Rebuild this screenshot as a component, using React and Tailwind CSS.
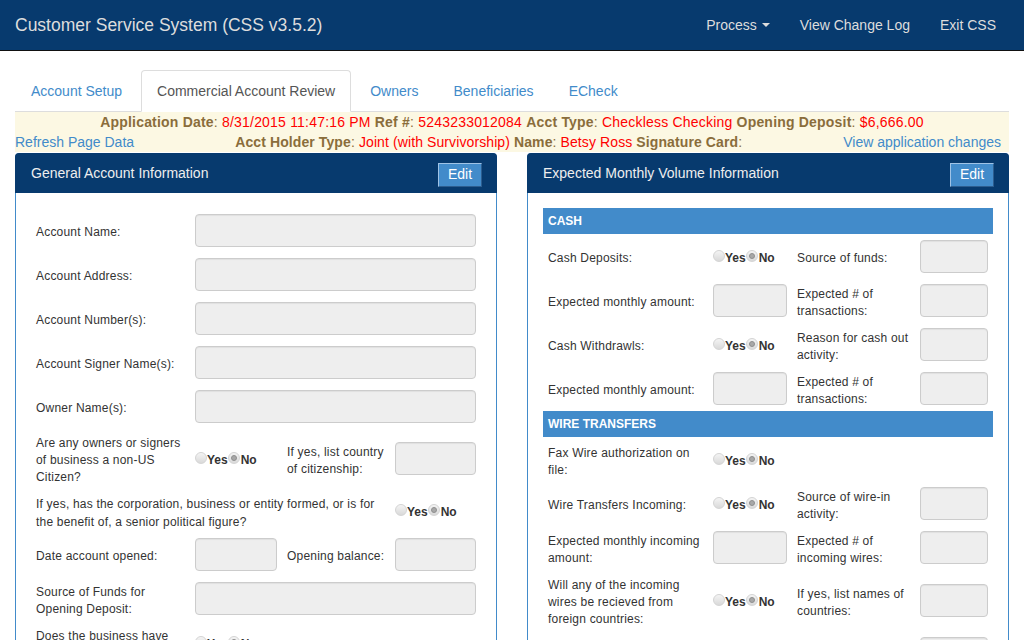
import React from 'react'

const Radio = ({ checked }) => (
  <span className="relative inline-flex items-center justify-center w-[12px] h-[12px] rounded-full border border-[#d4d4d4] bg-gradient-to-b from-[#f4f4f4] to-[#d9d9d9] -translate-y-[2px]">
    {checked && <span className="w-[6px] h-[6px] rounded-full bg-[#a8a8a8] border border-[#8f8f8f]" />}
  </span>
)

const YesNo = () => (
  <div className="flex items-center text-[12px] font-bold text-[#333] translate-y-[1px]">
    <Radio />
    <span>Yes</span>
    <Radio checked />
    <span className="ml-[1px]">No</span>
  </div>
)

const Box = ({ className = '' }) => (
  <input
    disabled
    className={'h-[33px] rounded-[4px] border border-[#ccc] bg-[#eee] shadow-[inset_0_1px_1px_rgba(0,0,0,0.06)] ' + className}
  />
)

const Label = ({ children, className = '' }) => (
  <div className={'text-[12px] leading-[16.5px] text-[#333] tracking-[0.2px] translate-y-[1.5px] ' + className}>{children}</div>
)

function LeftRow({ children }) {
  return <div className="grid grid-cols-[149px_82px_98px_81px] gap-x-[10px] items-center min-h-[33px]">{children}</div>
}

function RightRow({ children }) {
  return <div className="grid grid-cols-[155px_74px_113px_68px] gap-x-[10px] items-center min-h-[33px] px-[5px]">{children}</div>
}

const Panel = ({ title, children, bodyClass }) => (
  <div className="border border-[#428bca] rounded-t-[4px] bg-white">
    <div className="h-[40px] bg-[#073a6e] flex items-center justify-between pl-[16px] pr-[15px] -mt-px -mx-px rounded-t-[4px]">
      <span className="text-[14px] text-[#eee]">{title}</span>
      <button className="h-[24px] w-[44px] mt-[3px] bg-[#428bca] text-white text-[14px] border border-t-[#9fc3e6] border-l-[#9fc3e6] border-b-[#2c5d8f] border-r-[#2c5d8f]">
        Edit
      </button>
    </div>
    <div className={bodyClass}>{children}</div>
  </div>
)

const Section = ({ title }) => (
  <div className="h-[26px] bg-[#428bca] text-white font-bold text-[12px] flex items-center px-[5px]">{title}</div>
)

const L = ({ children }) => (
  <>
    <b className="text-[#8a6d3b]">{children}</b>
    <span className="text-[#8a6d3b]">:</span>{' '}
  </>
)

const V = ({ children }) => (
  <>
    <span className="text-[#f00]">{children}</span>{' '}
  </>
)

function App() {
  const tabs = ['Account Setup', 'Commercial Account Review', 'Owners', 'Beneficiaries', 'ECheck']

  return (
    <div className="min-h-screen bg-white font-['Liberation_Sans',Arial,sans-serif] text-[#333]">
      <header className="h-[51px] bg-[#073a6e] border-b border-[#111] flex items-center justify-between px-[15px]">
        <div className="text-[17.5px] text-[#ddd]">Customer Service System (CSS v3.5.2)</div>
        <nav className="flex items-center text-[14px] text-[#ddd]">
          <a className="px-[15px] flex items-center">
            Process
            <span className="ml-[5px] w-0 h-0 border-t-[4px] border-t-[#ddd] border-x-[4px] border-x-transparent" />
          </a>
          <a className="px-[15px]">View Change Log</a>
          <a className="pl-[15px] pr-[13px]">Exit CSS</a>
        </nav>
      </header>

      <main className="px-[15px] pt-[19px]">
        <ul className="flex border-b border-[#ddd]">
          {tabs.map((t, i) => (
            <li key={t} className="-mb-px mr-[2px]">
              <a
                className={
                  'block px-[15px] py-[10px] leading-[20px] text-[14px] mr-[1px] rounded-t-[4px] border ' +
                  (i === 1
                    ? 'bg-white border-[#ddd] border-b-white text-[#555]'
                    : 'border-transparent text-[#428bca]')
                }
              >
                {t}
              </a>
            </li>
          ))}
        </ul>

        <div className="bg-[#fcf8e3] text-[14px] leading-[20px] tracking-[0.2px]">
          <div className="text-center">
            <L>Application Date</L>
            <V>8/31/2015 11:47:16 PM</V>
            <L>Ref #</L>
            <V>5243233012084</V>
            <L>Acct Type</L>
            <V>Checkless Checking</V>
            <L>Opening Deposit</L>
            <span className="text-[#f00]">$6,666.00</span>
          </div>
          <div className="flex items-center">
            <a className="text-[#428bca] tracking-normal">Refresh Page Data</a>
            <div className="flex-1 text-center tracking-[0.1px]">
              <L>Acct Holder Type</L>
              <V>Joint (with Survivorship)</V>
              <L>Name</L>
              <V>Betsy Ross</V>
              <b className="text-[#8a6d3b]">Signature Card</b>
              <span className="text-[#8a6d3b]">:</span>
            </div>
            <a className="text-[#428bca] pr-[8px] tracking-normal">View application changes</a>
          </div>
        </div>

        <div className="grid grid-cols-2 gap-[30px] mt-[1px]">
          <Panel title="General Account Information" bodyClass="pt-[21px] px-[20px] pb-[20px] flex flex-col gap-y-[11px]">
            <LeftRow>
              <Label>Account Name:</Label>
              <Box className="col-span-3" />
            </LeftRow>
            <LeftRow>
              <Label>Account Address:</Label>
              <Box className="col-span-3" />
            </LeftRow>
            <LeftRow>
              <Label>Account Number(s):</Label>
              <Box className="col-span-3" />
            </LeftRow>
            <LeftRow>
              <Label>Account Signer Name(s):</Label>
              <Box className="col-span-3" />
            </LeftRow>
            <LeftRow>
              <Label>Owner Name(s):</Label>
              <Box className="col-span-3" />
            </LeftRow>
            <LeftRow>
              <Label className="leading-[17px] -my-[1px]">Are any owners or signers of business a non-US Citizen?</Label>
              <YesNo />
              <Label>If yes, list country of citizenship:</Label>
              <Box />
            </LeftRow>
            <LeftRow>
              <Label className="col-span-3 pr-[6px] leading-[18px] -my-[1.5px]">
                If yes, has the corporation, business or entity formed, or is for the benefit of, a senior political figure?
              </Label>
              <YesNo />
            </LeftRow>
            <LeftRow>
              <Label>Date account opened:</Label>
              <Box />
              <Label>Opening balance:</Label>
              <Box />
            </LeftRow>
            <LeftRow>
              <Label className="leading-[17px] -my-[0.5px]">Source of Funds for Opening Deposit:</Label>
              <Box className="col-span-3" />
            </LeftRow>
            <LeftRow>
              <Label className="leading-[17px] -my-[0.5px]">Does the business have foreign operations?</Label>
              <YesNo />
            </LeftRow>
            <LeftRow>
              <Label>Type of business:</Label>
              <Box className="col-span-3" />
            </LeftRow>
          </Panel>

          <Panel title="Expected Monthly Volume Information" bodyClass="pt-[15px] px-[15px] pb-[20px]">
            <Section title="CASH" />
            <div className="flex flex-col gap-y-[11px] my-[6px]">
              <RightRow>
                <Label>Cash Deposits:</Label>
                <YesNo />
                <Label>Source of funds:</Label>
                <Box />
              </RightRow>
              <RightRow>
                <Label>Expected monthly amount:</Label>
                <Box />
                <Label>Expected # of transactions:</Label>
                <Box />
              </RightRow>
              <RightRow>
                <Label>Cash Withdrawls:</Label>
                <YesNo />
                <Label>Reason for cash out activity:</Label>
                <Box />
              </RightRow>
              <RightRow>
                <Label>Expected monthly amount:</Label>
                <Box />
                <Label>Expected # of transactions:</Label>
                <Box />
              </RightRow>
            </div>
            <Section title="WIRE TRANSFERS" />
            <div className="flex flex-col gap-y-[11px] my-[6px]">
              <RightRow>
                <Label>Fax Wire authorization on file:</Label>
                <YesNo />
              </RightRow>
              <RightRow>
                <Label>Wire Transfers Incoming:</Label>
                <YesNo />
                <Label>Source of wire-in activity:</Label>
                <Box />
              </RightRow>
              <RightRow>
                <Label>Expected monthly incoming amount:</Label>
                <Box />
                <Label>Expected # of incoming wires:</Label>
                <Box />
              </RightRow>
              <RightRow>
                <Label className="leading-[17px]">Will any of the incoming wires be recieved from foreign countries:</Label>
                <YesNo />
                <Label>If yes, list names of countries:</Label>
                <Box />
              </RightRow>
              <RightRow>
                <Label>Wire Transfers Outgoing:</Label>
                <YesNo />
                <Label>Reason for wire-out activity:</Label>
                <Box />
              </RightRow>
            </div>
          </Panel>
        </div>
      </main>
    </div>
  )
}

export default App
